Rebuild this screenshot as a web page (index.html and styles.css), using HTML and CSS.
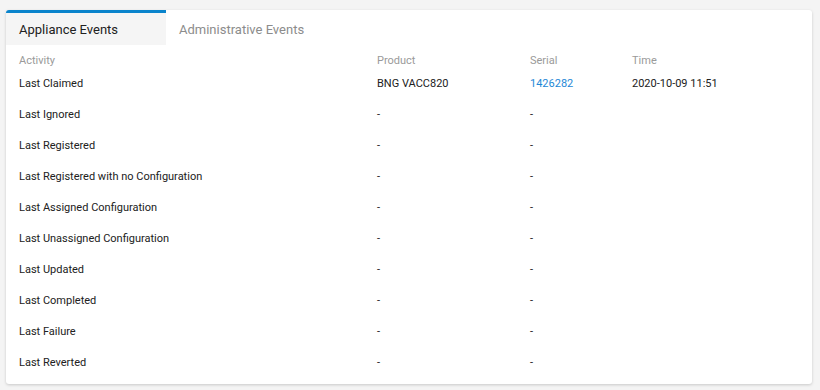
FILE: index.html
```html
<!DOCTYPE html>
<html lang="en">
<head>
    <meta charset="UTF-8">
    <title>Events</title>
    <link rel="stylesheet" href="styles.css">
</head>
<body>
<div class="events-card">
    <div class="tabs">
        <div class="tab active">Appliance Events</div>
        <div class="tab">Administrative Events</div>
    </div>
    <div class="events-table">
        <div class="row head">
            <div class="col activity">Activity</div>
            <div class="col product">Product</div>
            <div class="col serial">Serial</div>
            <div class="col time">Time</div>
        </div>
        <div class="row">
            <div class="col activity">Last Claimed</div>
            <div class="col product">BNG VACC820</div>
            <div class="col serial"><a href="#">1426282</a></div>
            <div class="col time">2020-10-09 11:51</div>
        </div>
        <div class="row">
            <div class="col activity">Last Ignored</div>
            <div class="col product">-</div>
            <div class="col serial">-</div>
            <div class="col time"></div>
        </div>
        <div class="row">
            <div class="col activity">Last Registered</div>
            <div class="col product">-</div>
            <div class="col serial">-</div>
            <div class="col time"></div>
        </div>
        <div class="row">
            <div class="col activity">Last Registered with no Configuration</div>
            <div class="col product">-</div>
            <div class="col serial">-</div>
            <div class="col time"></div>
        </div>
        <div class="row">
            <div class="col activity">Last Assigned Configuration</div>
            <div class="col product">-</div>
            <div class="col serial">-</div>
            <div class="col time"></div>
        </div>
        <div class="row">
            <div class="col activity">Last Unassigned Configuration</div>
            <div class="col product">-</div>
            <div class="col serial">-</div>
            <div class="col time"></div>
        </div>
        <div class="row">
            <div class="col activity">Last Updated</div>
            <div class="col product">-</div>
            <div class="col serial">-</div>
            <div class="col time"></div>
        </div>
        <div class="row">
            <div class="col activity">Last Completed</div>
            <div class="col product">-</div>
            <div class="col serial">-</div>
            <div class="col time"></div>
        </div>
        <div class="row">
            <div class="col activity">Last Failure</div>
            <div class="col product">-</div>
            <div class="col serial">-</div>
            <div class="col time"></div>
        </div>
        <div class="row">
            <div class="col activity">Last Reverted</div>
            <div class="col product">-</div>
            <div class="col serial">-</div>
            <div class="col time"></div>
        </div>
    </div>
</div>
</body>
</html>
```

FILE: styles.css
```css
body {
    margin: 0;
    padding: 10px 8px 6px 6px;
    background-color: #f4f4f4;
    font-family: Roboto, "Liberation Sans", sans-serif;
    color: #212121;
}
.events-card {
    width: 806px;
    height: 374px;
    box-sizing: border-box;
    background-color: #fff;
    border-radius: 3px;
    box-shadow: 0 1px 3px rgba(0, 0, 0, 0.18);
    overflow: hidden;
}
.tabs {
    display: flex;
    height: 35px;
}
.tab {
    width: 160px;
    box-sizing: border-box;
    padding: 1px 13px 0;
    border-top: 3px solid transparent;
    font-size: 13px;
    line-height: 31px;
    color: #8c8c8c;
}
.tab.active {
    background-color: #f5f5f5;
    border-top-color: #0a84cc;
    color: #212121;
}
.events-table {
    padding: 8px 0 0 13px;
    font-size: 11px;
}
.row {
    display: flex;
    height: 31px;
    line-height: 31px;
}
.row.head {
    height: 15px;
    line-height: 15px;
    color: #9a9a9a;
}
.col.activity {
    width: 358px;
}
.col.product {
    width: 153px;
}
.col.serial {
    width: 102px;
}
.col.time {
    flex: 1;
}
.col a {
    color: #1e88d6;
    text-decoration: none;
}
```
